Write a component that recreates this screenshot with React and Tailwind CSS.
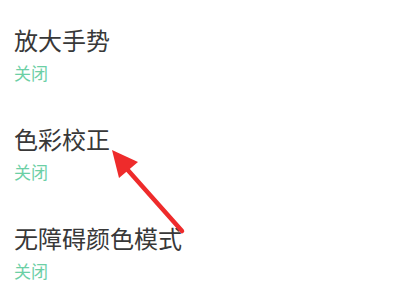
export default function App() {
  const items = ["放大手势", "色彩校正", "无障碍颜色模式"];
  return (
    <div
      className="relative w-[400px] h-[300px] bg-white overflow-hidden"
      style={{ fontFamily: '"Noto Sans CJK SC", "Noto Sans", sans-serif' }}
    >
      <div className="flex flex-col gap-[46px] pt-[28px] pl-[14px]">
        {items.map((t) => (
          <div key={t} className="flex flex-col gap-[12px]">
            <div className="text-[24px] leading-[24px] text-[#383838]">{t}</div>
            <div className="text-[17px] leading-[17px] text-[#6ccfa5]">关闭</div>
          </div>
        ))}
      </div>
      <svg className="absolute left-0 top-0" width="400" height="300" viewBox="0 0 400 300">
        <line x1="126" y1="168" x2="182" y2="231" stroke="#ee2b2b" strokeWidth="4.5" strokeLinecap="round" />
        <polygon points="112,150 138,162 119,178" fill="#ee2b2b" />
      </svg>
    </div>
  );
}
